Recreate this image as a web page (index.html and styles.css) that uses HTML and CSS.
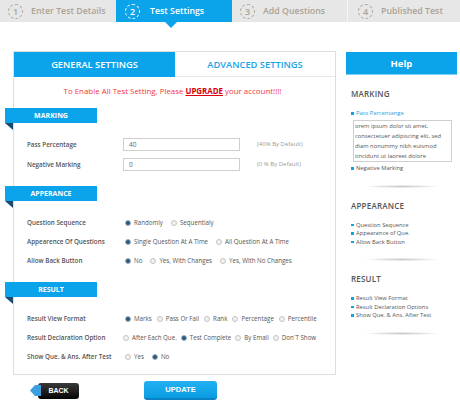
FILE: index.html
```html
<!DOCTYPE html>
<html>
<head>
<meta charset="utf-8">
<link rel="stylesheet" href="styles.css">
</head>
<body>
<div class="steps">
  <div class="step"><span class="num">1</span>Enter Test Details</div>
  <div class="step active"><span class="num">2</span>Test Settings</div>
  <div class="step"><span class="num">3</span>Add Questions</div>
  <div class="step last"><span class="num">4</span>Published Test</div>
</div>

<div class="main">
  <div class="left">
    <div class="panel">
      <div class="tabs">
        <div class="tab on">GENERAL SETTINGS</div>
        <div class="tab off">ADVANCED SETTINGS</div>
      </div>
      <div class="warn">To Enable All Test Setting, Please <span class="up">UPGRADE</span> your account!!!!</div>

      <div class="ribbon">MARKING</div>
      <div class="rows first">
        <div class="row in">
          <span class="lbl">Pass Percentage</span>
          <span class="input">40</span>
          <span class="hint">(40% By Default)</span>
        </div>
        <div class="row in">
          <span class="lbl">Negative Marking</span>
          <span class="input">0</span>
          <span class="hint">(0 % By Default)</span>
        </div>
      </div>

      <div class="ribbon">APPERANCE</div>
      <div class="rows">
        <div class="row">
          <span class="lbl">Question Sequence</span>
          <span class="opts wide">
            <span class="opt"><i class="r on"></i>Randomly</span>
            <span class="opt"><i class="r"></i>Sequentialy</span>
          </span>
        </div>
        <div class="row">
          <span class="lbl">Appearence Of Questions</span>
          <span class="opts wide">
            <span class="opt"><i class="r on"></i>Single Question At A Time</span>
            <span class="opt"><i class="r"></i>All Question At A Time</span>
          </span>
        </div>
        <div class="row">
          <span class="lbl">Allow Back Button</span>
          <span class="opts wide">
            <span class="opt"><i class="r on"></i>No</span>
            <span class="opt"><i class="r"></i>Yes, With Changes</span>
            <span class="opt"><i class="r"></i>Yes, With No Changes</span>
          </span>
        </div>
      </div>

      <div class="ribbon">RESULT</div>
      <div class="rows last">
        <div class="row">
          <span class="lbl">Result View Format</span>
          <span class="opts">
            <span class="opt"><i class="r on"></i>Marks</span>
            <span class="opt"><i class="r"></i>Pass Or Fail</span>
            <span class="opt"><i class="r"></i>Rank</span>
            <span class="opt"><i class="r"></i>Percentage</span>
            <span class="opt"><i class="r"></i>Percentile</span>
          </span>
        </div>
        <div class="row">
          <span class="lbl">Result Declaration Option</span>
          <span class="opts tight">
            <span class="opt"><i class="r"></i>After Each Que.</span>
            <span class="opt"><i class="r on"></i>Test Complete</span>
            <span class="opt"><i class="r"></i>By Email</span>
            <span class="opt"><i class="r"></i>Don`T Show</span>
          </span>
        </div>
        <div class="row">
          <span class="lbl">Show Que. &amp; Ans. After Test</span>
          <span class="opts wide">
            <span class="opt"><i class="r"></i>Yes</span>
            <span class="opt"><i class="r on"></i>No</span>
          </span>
        </div>
      </div>
    </div>

    <div class="actions">
      <div class="back">
        <svg class="arrow" width="11" height="13" viewBox="0 0 11 13"><polygon points="0,6.5 5,1 11,1 11,12 5,12" fill="#3d9fe0"/></svg>
        <span class="backbody">BACK</span>
      </div>
      <div class="update">UPDATE</div>
    </div>
  </div>

  <div class="side">
    <div class="help">Help</div>
    <div class="sbody">
      <div class="sh">MARKING</div>
      <ul class="sl">
        <li class="cur">Pass Parcentange</li>
      </ul>
      <div class="box">orem ipsum dolor sit amet,<br>consectetuer adipiscing elit, sed<br>diam nonummy nibh euismod<br>tincidunt ut laoreet dolore</div>
      <ul class="sl">
        <li>Negative Marking</li>
      </ul>
      <div class="div"></div>

      <div class="sh">APPEARANCE</div>
      <ul class="sl">
        <li>Question Sequence</li>
        <li>Appearance of Que.</li>
        <li>Allow Back Button</li>
      </ul>
      <div class="div"></div>

      <div class="sh">RESULT</div>
      <ul class="sl">
        <li>Result View Format</li>
        <li>Result Declaration Options</li>
        <li>Show Que. &amp; Ans. After Test</li>
      </ul>
      <div class="div"></div>
    </div>
  </div>
</div>
</body>
</html>
```

FILE: styles.css
```css
* { box-sizing: border-box; }
html, body { margin: 0; padding: 0; background: #fff; }
body { font-family: "Open Sans", "DejaVu Sans", sans-serif; color: #555; width: 460px; height: 400px; overflow: hidden; }

.steps {
  display: grid;
  grid-template-columns: 116px 116px 115px 1fr;
  height: 22px;
  background: #e7e7e7;
}
.step {
  display: flex;
  align-items: center;
  gap: 8px;
  padding-left: 8px;
  font-size: 8.8px;
  font-weight: 600;
  color: #aca396;
  position: relative;
}
.step.active { padding-left: 9px; gap: 10px; }
.step.last { border-left: 1px solid #f6f6f6; padding-left: 10px; }
.num {
  width: 15px;
  height: 15px;
  border: 1.4px dashed #aca396;
  border-radius: 50%;
  display: flex;
  align-items: center;
  justify-content: center;
  font-size: 9px;
  font-weight: 600;
  line-height: 1;
}
.step.active { background: #0ba3ea; color: #fff; }
.step.active .num { border-color: #fff; }
.step.active::after {
  content: "";
  position: absolute;
  left: 49px;
  top: 100%;
  border-left: 6px solid transparent;
  border-right: 6px solid transparent;
  border-top: 6px solid #0ba3ea;
}

.main {
  display: flex;
  gap: 10px;
  padding: 29px 0 0 13px;
}
.left { width: 323px; display: flex; flex-direction: column; }
.panel {
  width: 323px;
  border: 1px solid #dedede;
}
.tabs { display: grid; grid-template-columns: 161px 1fr; height: 25px; }
.tab {
  display: flex;
  align-items: center;
  justify-content: center;
  font-size: 9.3px;
  font-weight: 600;
}
.tab.on { background: #0ba3ea; color: #fff; }
.tab.off { color: #1aa3e6; border-bottom: 1px solid #e8e8e8; }

.warn {
  margin-top: 8px;
  height: 12px;
  line-height: 12px;
  text-align: center;
  font-size: 7.9px;
  color: #f2383a;
  padding-right: 4px;
}
.warn .up { color: #d9000c; font-weight: 700; text-decoration: underline; }

.ribbon {
  margin-left: -9px;
  width: 92px;
  height: 15px;
  background: #0ba3ea;
  color: #fff;
  font-size: 7px;
  font-weight: 700;
  display: flex;
  align-items: center;
  justify-content: center;
  position: relative;
}
.ribbon::after {
  content: "";
  position: absolute;
  left: 0;
  top: 100%;
  border-top: 7px solid #1b4c70;
  border-left: 8px solid transparent;
}
.warn + .ribbon { margin-top: 11px; }

.rows { padding: 12px 0 12px 13px; }
.rows.first { padding-top: 11px; }
.rows.last { padding-bottom: 8px; }
.row {
  display: flex;
  align-items: center;
  height: 19px;
  font-size: 6.2px;
}
.row.in { height: 20px; }
.lbl { width: 96px; flex: none; color: #555; font-weight: 600; font-size: 6.3px; }
.input {
  width: 117px;
  height: 13px;
  border: 1px solid #cfcfcf;
  display: flex;
  align-items: center;
  padding-left: 5px;
  font-size: 6.5px;
  color: #666;
}
.hint { margin-left: 17px; color: #999; font-size: 6px; }

.opts { display: flex; align-items: center; gap: 5px; padding-left: 2px; color: #555; }
.opts.wide { gap: 8px; }
.opts.tight { gap: 4px; padding-left: 0; }
.opt { display: inline-flex; align-items: center; gap: 3px; }
.r {
  width: 6px;
  height: 6px;
  border-radius: 50%;
  border: 1px solid #c4c4c4;
  background: #f1f1f1;
  flex: none;
}
.r.on {
  background: #2b5778;
  border: 1px solid #9db3c6;
}

.actions {
  display: flex;
  align-items: center;
  margin-top: 6px;
  padding-left: 17px;
}
.back { display: flex; align-items: center; }
.arrow { position: relative; z-index: 1; margin-right: -3px; }
.backbody {
  width: 41px;
  height: 16px;
  border-radius: 3px;
  background: linear-gradient(#3a3a3a, #050505);
  color: #fff;
  font-size: 7px;
  font-weight: 700;
  display: flex;
  align-items: center;
  justify-content: center;
  font-family: "Liberation Sans", Arial, sans-serif;
}
.update {
  margin-left: 65px;
  width: 73px;
  height: 19px;
  border-radius: 3px;
  background: linear-gradient(#22b0f2, #0a9ce2);
  border-bottom: 2px solid #0a82c4;
  color: #fff;
  font-size: 7.5px;
  font-weight: 700;
  display: flex;
  align-items: center;
  justify-content: center;
  font-family: "Liberation Sans", Arial, sans-serif;
}

.side { width: 111px; margin-top: 1px; }
.help {
  height: 23px;
  background: #0ba3ea;
  color: #fff;
  font-size: 9.5px;
  font-weight: 700;
  display: flex;
  align-items: center;
  justify-content: center;
  border-bottom: 1px solid #7fd0f5;
}
.sbody { padding-left: 5px; }
.sh {
  margin-top: 14px;
  height: 10px;
  line-height: 10px;
  font-size: 8px;
  font-weight: 600;
  color: #555;
  letter-spacing: 0.2px;
}
.div + .sh { margin-top: 13px; }
.sl { list-style: none; margin: 0; padding: 0; }
.sh + .sl { margin-top: 10px; }
.sl li {
  position: relative;
  padding-left: 5px;
  height: 8.5px;
  line-height: 8.5px;
  font-size: 5.8px;
  color: #555;
  white-space: nowrap;
}
.sl li::before {
  content: "";
  position: absolute;
  left: 0;
  top: 3px;
  width: 2.5px;
  height: 2.5px;
  background: #0ba3ea;
}
.sl li.cur { color: #1aa3e6; }
.box {
  margin: 2.5px 0 2px 2px;
  width: 99px;
  height: 42px;
  border: 1px solid #cfcfcf;
  padding: 0 0 0 1px;
  font-size: 5.8px;
  line-height: 10px;
  color: #555;
  white-space: nowrap;
  overflow: hidden;
}
.div {
  margin: 12px 0 0 14px;
  width: 73px;
  height: 3px;
  background: radial-gradient(ellipse at center, rgba(0,0,0,0.22) 0%, rgba(0,0,0,0.06) 55%, rgba(0,0,0,0) 75%);
}
```
